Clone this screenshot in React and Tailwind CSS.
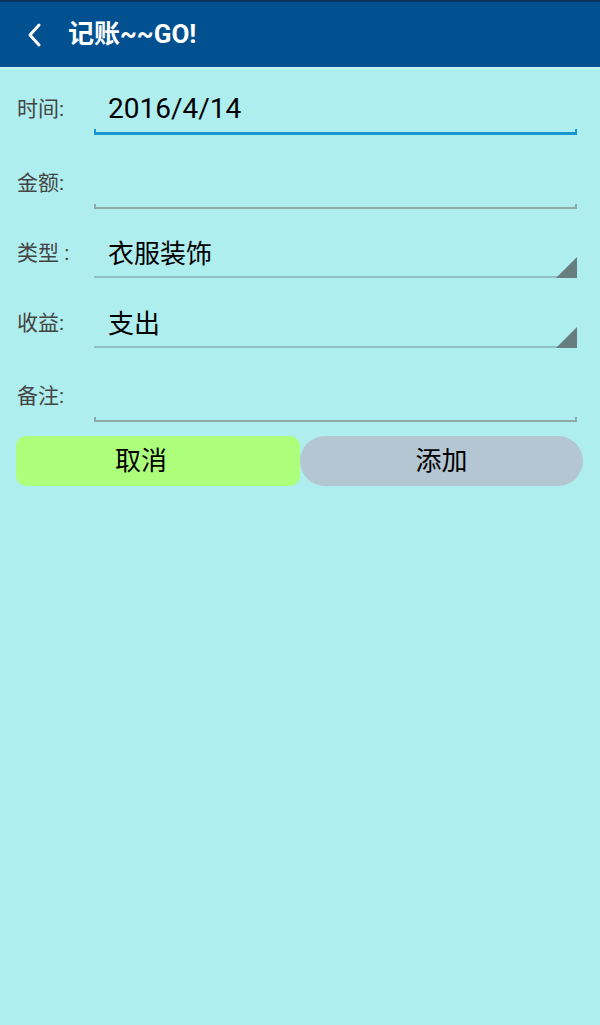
import React from "react";

const font = { fontFamily: '"Roboto", "Noto Sans CJK SC", sans-serif' };

const Row = ({ label, value, valueSize = "text-[28px]", gap = "mb-[9px]", line = "plain", arrow = false, h }) => (
  <div className={`flex items-stretch ${h}`}>
    <div className="w-[94px] pl-[17px] flex items-end text-[21px] leading-[20px] text-[#444444] pb-[16px]">{label}</div>
    <div className="flex-1 mr-[23px] relative flex flex-col justify-end">
      <div className={`pl-[14px] ${valueSize} text-black leading-none ${gap}`}>{value}</div>
      {line === "edit-focus" && (
        <div className="h-[6px] border-x-2 border-b-[3px] border-[#1896d2]" />
      )}
      {line === "edit" && (
        <div className="h-[5px] border-x-2 border-b-2 border-[#8fa8aa]" />
      )}
      {line === "spinner" && (
        <div className="h-[2px] bg-[#8dc2c4] mb-[1px]" />
      )}
      {arrow && (
        <svg className="absolute right-0 bottom-[1px]" width="21" height="21" viewBox="0 0 21 21">
          <polygon points="21,0 21,21 0,21" fill="#687d7d" />
        </svg>
      )}
    </div>
  </div>
);

export default function App() {
  return (
    <div className="w-[600px] h-[1025px] bg-[#afeeee] flex flex-col" style={font}>
      <div className="h-[67px] bg-[#01508f] border-t-2 border-[#0b3560] flex items-center shrink-0">
        <svg className="ml-[26px]" width="18" height="24" viewBox="0 0 18 24">
          <polyline points="13,2 4,12 13,22" fill="none" stroke="#ffffff" strokeWidth="3" strokeLinecap="round" strokeLinejoin="round" />
        </svg>
        <span className="ml-[24px] text-white text-[26px] font-bold">记账~~GO!</span>
      </div>
      <div className="h-[2px] bg-[#c6f4f4]" />
      <Row h="h-[66px]" label="时间:" value="2016/4/14" gap="mb-[6px]" line="edit-focus" />
      <Row h="h-[74px]" label="金额:" value="" line="edit" />
      <Row h="h-[70px]" label="类型 :" value="衣服装饰" valueSize="text-[26px]" line="spinner" arrow />
      <Row h="h-[70px]" label="收益:" value="支出" valueSize="text-[26px]" line="spinner" arrow />
      <Row h="h-[73px]" label="备注:" value="" line="edit" />
      <div className="flex mt-[14px] pl-[16px] pr-[17px]">
        <button className="w-[284px] shrink-0 h-[50px] bg-[#adff7b] rounded-[10px] text-[26px] text-black flex items-center">
          <span className="w-[250px] text-center">取消</span>
        </button>
        <button className="flex-1 h-[50px] bg-[#b4c6d2] rounded-full text-[26px] text-black">添加</button>
      </div>
    </div>
  );
}
